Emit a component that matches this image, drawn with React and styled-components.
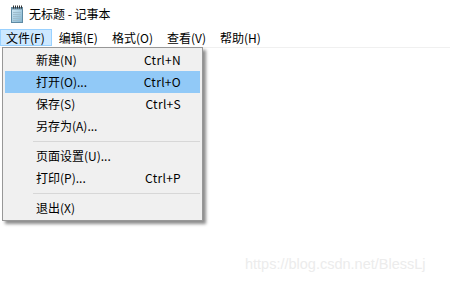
import React from "react";
import styled, { createGlobalStyle } from "styled-components";

const GlobalStyle = createGlobalStyle`
  html, body {
    margin: 0;
    padding: 0;
    background: #ffffff;
  }
  body {
    font-family: "Noto Sans CJK SC", "Noto Sans", sans-serif;
    font-size: 12px;
    color: #000;
  }
`;

const fileItems = [
  { label: "新建(N)", key: "Ctrl+N" },
  { label: "打开(O)...", key: "Ctrl+O", active: true },
  { label: "保存(S)", key: "Ctrl+S" },
  { label: "另存为(A)..." },
  { sep: true },
  { label: "页面设置(U)..." },
  { label: "打印(P)...", key: "Ctrl+P" },
  { sep: true },
  { label: "退出(X)" },
];

const menus = ["文件(F)", "编辑(E)", "格式(O)", "查看(V)", "帮助(H)"];

const NotepadIcon = () => (
  <svg width="13" height="18" viewBox="0 0 13 18">
    <defs>
      <linearGradient id="pad" x1="0" y1="0" x2="1" y2="1">
        <stop offset="0" stopColor="#d6ecf7" />
        <stop offset="1" stopColor="#7fb3cf" />
      </linearGradient>
    </defs>
    <rect x="0.5" y="2.5" width="11" height="15" fill="url(#pad)" stroke="#5f8aa3" />
    <rect x="0.5" y="2.5" width="11" height="2" fill="#6c8fa5" />
    {[2, 4, 6, 8, 10].map((x) => (
      <rect key={x} x={x} y="0.5" width="1" height="3" fill="#333" />
    ))}
    {[7, 9, 11, 13, 15].map((y) => (
      <line key={y} x1="2" y1={y + 0.5} x2="10" y2={y + 0.5} stroke="#9dbccd" />
    ))}
  </svg>
);

const App = () => {
  return (
    <>
      <GlobalStyle />
      <Window>
        <TitleBar>
          <NotepadIcon />
          <Title>无标题 - 记事本</Title>
        </TitleBar>
        <MenuBar>
          {menus.map((m, i) => (
            <MenuButton key={m} $open={i === 0}>
              {m}
            </MenuButton>
          ))}
        </MenuBar>
        <Editor />
        <Dropdown>
          {fileItems.map((it, i) =>
            it.sep ? (
              <Separator key={i} />
            ) : (
              <DropItem key={i} $active={it.active}>
                <span>{it.label}</span>
                <Shortcut>{it.key}</Shortcut>
              </DropItem>
            )
          )}
        </Dropdown>
        <Watermark>https://blog.csdn.net/BlessLj</Watermark>
      </Window>
    </>
  );
};

export default App;

const Window = styled.div`
  position: relative;
  width: 450px;
  height: 286px;
  overflow: hidden;
  background: #fff;
  display: flex;
  flex-direction: column;
`;

const TitleBar = styled.div`
  height: 29px;
  display: flex;
  align-items: center;
  padding-left: 11px;
  gap: 5px;
  box-sizing: border-box;
  padding-bottom: 2px;
`;

const Title = styled.span`
  font-size: 12px;
  line-height: 16px;
`;

const MenuBar = styled.div`
  height: 18px;
  display: flex;
  align-items: flex-start;
  border-bottom: 1px solid #f0f0f0;
  padding-top: 0;
`;

const MenuButton = styled.div`
  height: 17px;
  line-height: 16px;
  padding: 0 6px 0 5px;
  box-sizing: border-box;
  border: 1px solid ${(p) => (p.$open ? "#99d1ff" : "transparent")};
  background: ${(p) => (p.$open ? "#cce8ff" : "transparent")};
  white-space: nowrap;
  margin-right: 1px;
`;

const Editor = styled.div`
  flex: 1;
  background: #fff;
`;

const Dropdown = styled.div`
  position: absolute;
  left: 2px;
  top: 47px;
  width: 201px;
  box-sizing: border-box;
  background: #f0f0f0;
  border: 1px solid #979797;
  padding: 1px 2px 1px 2px;
  box-shadow: 3px 3px 3px rgba(0, 0, 0, 0.45);
  display: flex;
  flex-direction: column;
`;

const DropItem = styled.div`
  height: 22px;
  display: flex;
  align-items: center;
  justify-content: space-between;
  padding: 0 19px 0 31px;
  background: ${(p) => (p.$active ? "#91c9f7" : "transparent")};
  line-height: 16px;
  white-space: nowrap;
`;

const Shortcut = styled.span`
  letter-spacing: 0.3px;
`;

const Separator = styled.div`
  height: 8px;
  display: flex;
  align-items: center;
  padding-left: 28px;
  &::after {
    content: "";
    flex: 1;
    height: 1px;
    background: #d7d7d7;
  }
`;

const Watermark = styled.div`
  position: absolute;
  left: 245px;
  top: 256px;
  font-family: "Liberation Sans", Arial, sans-serif;
  font-size: 14.5px;
  color: #ececec;
  white-space: nowrap;
`;
